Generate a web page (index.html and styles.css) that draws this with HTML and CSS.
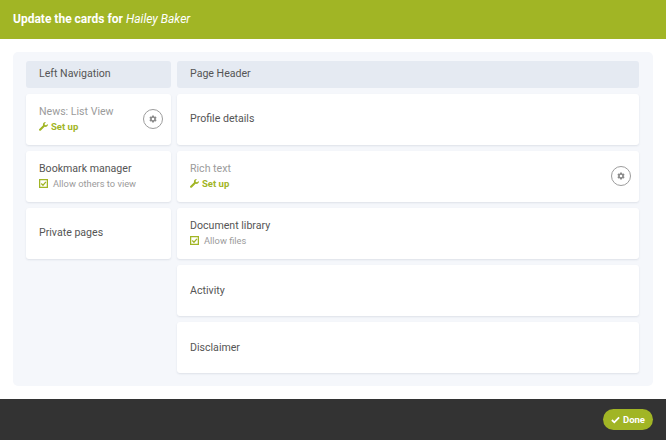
FILE: index.html
```html
<!DOCTYPE html>
<html lang="en">
<head>
<meta charset="utf-8">
<title>Update the cards</title>
<link rel="stylesheet" href="styles.css">
</head>
<body>
<svg class="defs" width="0" height="0" aria-hidden="true">
  <defs>
    <symbol id="wrench" viewBox="0 0 10 10"><path d="M9.600 2.200 7.900 3.700 6.500 3.400 6.200 2 7.800.4C6.500 0 5.100.5 4.600 1.700c-.3.7-.3 1.300 0 1.900L.4 7.700c-.5.5-.5 1.200 0 1.700s1.200.5 1.700 0L6.200 5.300c1.500.5 3-.1 3.500-1.400.1-.5.1-1.100-.1-1.700Z" fill="currentColor"/></symbol>
    <symbol id="gear" viewBox="0 0 10 10"><path fill-rule="evenodd" d="M4 .5h2l.3 1.300.9.5 1.300-.4 1 1.700-1 .9v1l1 .9-1 1.700-1.300-.4-.9.5L6 9.500H4l-.3-1.300-.9-.5-1.300.4-1-1.700 1-.9v-1l-1-.9 1-1.700 1.300.4.9-.5ZM5 3.400a1.600 1.600 0 1 0 0 3.200 1.600 1.600 0 0 0 0-3.200Z" fill="currentColor"/></symbol>
    <symbol id="box" viewBox="0 0 10 10"><rect x=".7" y=".7" width="8.600" height="8.600" fill="none" stroke="currentColor" stroke-width="1.400"/><path d="M2.500 5 4.400 6.900 7.700 3.100" fill="none" stroke="currentColor" stroke-width="1.400"/></symbol>
  </defs>
</svg>
<div class="page">
  <header class="topbar">
    <h1 class="title">Update the cards for <em>Hailey Baker</em></h1>
  </header>
  <main class="content">
    <section class="panel">
      <div class="column column-left">
        <div class="col-head">Left Navigation</div>
        <div class="card">
          <div class="card-body">
            <div class="card-title muted">News: List View</div>
            <div class="setup"><svg class="ico-wrench"><use href="#wrench"/></svg>Set up</div>
          </div>
          <button class="gear-btn" aria-label="Settings"><svg class="ico-gear"><use href="#gear"/></svg></button>
        </div>
        <div class="card">
          <div class="card-body">
            <div class="card-title">Bookmark manager</div>
            <div class="check"><svg class="ico-box"><use href="#box"/></svg>Allow others to view</div>
          </div>
        </div>
        <div class="card">
          <div class="card-body"><div class="card-title">Private pages</div></div>
        </div>
      </div>
      <div class="column column-right">
        <div class="col-head">Page Header</div>
        <div class="card">
          <div class="card-body"><div class="card-title">Profile details</div></div>
        </div>
        <div class="card">
          <div class="card-body">
            <div class="card-title muted">Rich text</div>
            <div class="setup"><svg class="ico-wrench"><use href="#wrench"/></svg>Set up</div>
          </div>
          <button class="gear-btn" aria-label="Settings"><svg class="ico-gear"><use href="#gear"/></svg></button>
        </div>
        <div class="card">
          <div class="card-body">
            <div class="card-title">Document library</div>
            <div class="check"><svg class="ico-box"><use href="#box"/></svg>Allow files</div>
          </div>
        </div>
        <div class="card">
          <div class="card-body"><div class="card-title">Activity</div></div>
        </div>
        <div class="card">
          <div class="card-body"><div class="card-title">Disclaimer</div></div>
        </div>
      </div>
    </section>
  </main>
  <footer class="footer">
    <button class="done"><svg class="ico-check" viewBox="0 0 10 8"><path d="M1 4 3.700 6.600 9 1.200" fill="none" stroke="currentColor" stroke-width="2"/></svg>Done</button>
  </footer>
</div>
</body>
</html>
```
FILE: styles.css
```css
* { box-sizing: border-box; }
html, body { margin: 0; padding: 0; }
body {
  width: 666px;
  height: 440px;
  overflow: hidden;
  background: #fff;
  font-family: Roboto, "Noto Sans", sans-serif;
  color: #4a4a4a;
}
.defs { position: absolute; }
.page { display: flex; flex-direction: column; height: 440px; }
.topbar {
  height: 39px;
  background: #a1b525;
  display: flex;
  align-items: center;
  padding: 0 13px 2px;
}
.title { margin: 0; font-size: 12px; font-weight: 700; color: #fff; }
.title em { font-weight: 400; font-style: italic; }
.content { flex: 1; padding: 13px 13px; }
.panel {
  height: 334px;
  background: #f5f7fb;
  border-radius: 5px;
  padding: 9px 14px 0 13px;
  display: flex;
  gap: 6px;
}
.column { display: flex; flex-direction: column; gap: 6.400px; }
.column-left { width: 145px; }
.column-right { flex: 1; }
.col-head {
  height: 26.600px;
  background: #e5eaf2;
  border-radius: 3px;
  display: flex;
  align-items: center;
  padding: 0 13px 2px;
  font-size: 10.600px;
  color: #555;
}
.card {
  height: 50.700px;
  background: #fff;
  border-radius: 3px;
  box-shadow: 0 1px 2px rgba(60, 70, 100, .12);
  display: flex;
  align-items: center;
  justify-content: space-between;
  padding: 0 8px 0 13px;
}
.card-body { margin-top: -1px; }
.card-title { font-size: 10.600px; color: #555; line-height: 15px; }
.card-title.muted { color: #9b9b9b; }
.setup {
  display: flex;
  align-items: center;
  gap: 3px;
  margin-top: 1px;
  font-size: 9.500px;
  font-weight: 700;
  line-height: 13px;
  color: #a1b525;
}
.ico-wrench { width: 9px; height: 9px; }
.check {
  display: flex;
  align-items: center;
  gap: 5px;
  margin-top: 1px;
  font-size: 9.300px;
  line-height: 13px;
  color: #9b9b9b;
}
.ico-box { width: 9px; height: 9px; color: #a1b525; }
.gear-btn {
  width: 20px;
  height: 20px;
  padding: 0;
  border: 1px solid #9c9c9c;
  border-radius: 50%;
  background: #fff;
  color: #8a8a8a;
  display: flex;
  align-items: center;
  justify-content: center;
}
.ico-gear { width: 8px; height: 8px; }
.footer {
  height: 41px;
  background: #333;
  display: flex;
  align-items: center;
  justify-content: flex-end;
  padding: 0 13px;
}
.done {
  width: 50px;
  height: 21px;
  padding: 0;
  border: 0;
  border-radius: 11px;
  background: #a1b525;
  color: #fff;
  font: 700 9.500px Roboto, sans-serif;
  display: flex;
  align-items: center;
  justify-content: center;
  gap: 3px;
}
.ico-check { width: 9px; height: 8px; }
```
